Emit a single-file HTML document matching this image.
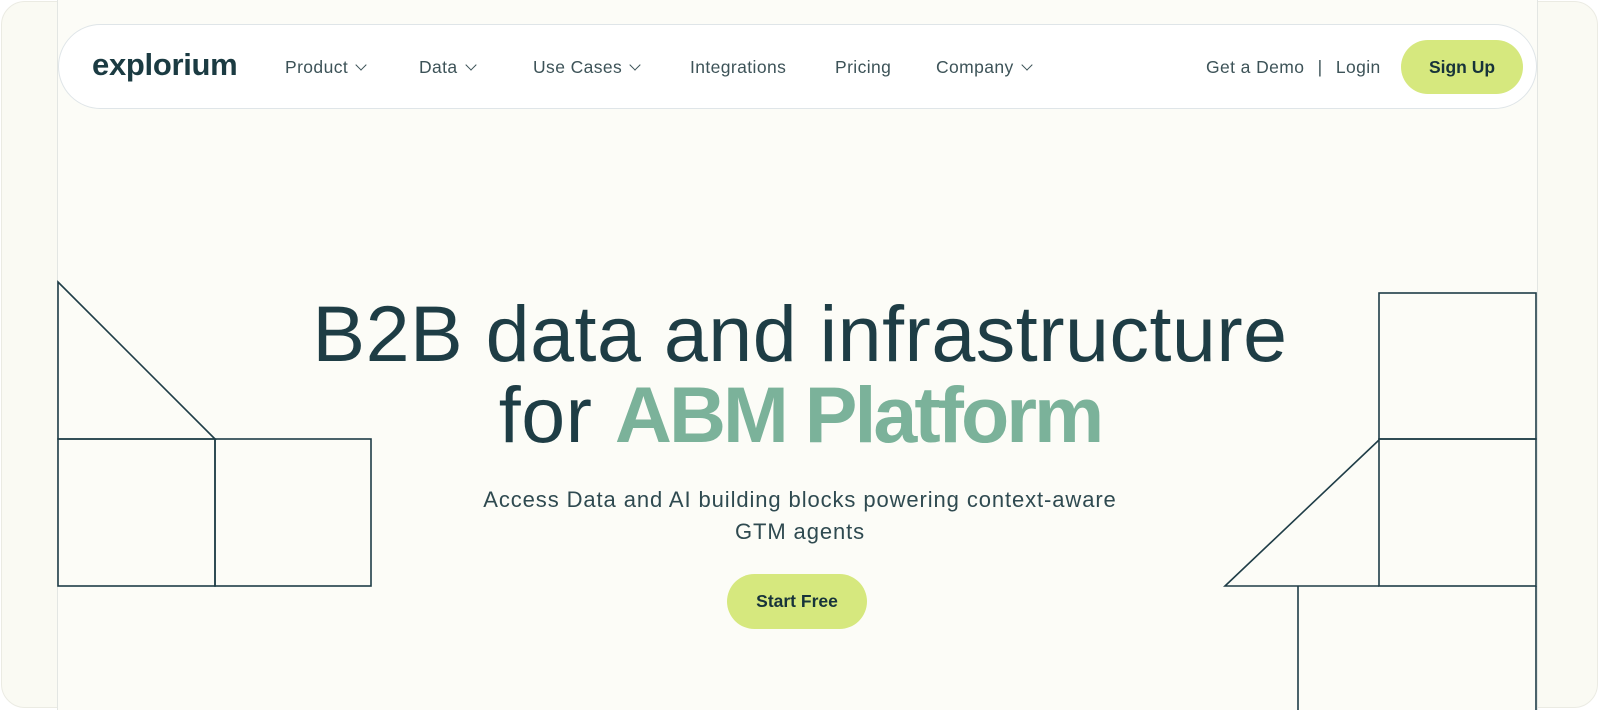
<!DOCTYPE html>
<html><head><style>
*{margin:0;padding:0;box-sizing:border-box}
body{width:1600px;height:710px;background:#fff;font-family:"Liberation Sans",sans-serif;color:#1e3d45;overflow:hidden;position:relative}
.frame{position:absolute;left:1px;top:1px;width:1597px;height:707px;border:1px solid #ebebe3;border-radius:24px;background:#fafaf3;overflow:hidden}
.guide{position:absolute;top:0;bottom:0;width:1px;background:#e3e6e3}
.main{position:absolute;left:58px;top:0;width:1479px;height:710px;background:#fcfcf7}
.nav{position:absolute;left:58px;top:24px;width:1479px;height:85px;background:#fff;border:1px solid #dfe5e8;border-radius:43px}
.logo{position:absolute;left:33px;top:22px;font-size:31px;font-weight:600;letter-spacing:-0.3px;color:#1b3b42}
.nav .it{position:absolute;top:32px;font-size:17.5px;letter-spacing:0.4px;color:#3d5358}
.chev{display:inline-block;width:8px;height:8px;border-right:1.5px solid #3d5358;border-bottom:1.5px solid #3d5358;transform:rotate(45deg);margin-left:9px;position:relative;top:-4px}
.btn{position:absolute;background:#d6e87e;border-radius:28px;font-weight:700;color:#17333a;text-align:center}
h1{position:absolute;left:0;width:1600px;text-align:center;font-weight:400;font-size:79px;color:#1e3d45;letter-spacing:0.5px;line-height:90px}
.sub{position:absolute;left:0;width:1600px;text-align:center;font-size:22px;letter-spacing:0.9px;line-height:32px;color:#2f4a50;top:484px}
</style></head><body>
<div class="frame"></div>
<div class="main"></div>
<div class="guide" style="left:57px"></div>
<div class="guide" style="left:1537px"></div>
<div class="nav">
<div class="logo">explorium</div>
<div class="it" style="left:226px">Product<span class="chev"></span></div>
<div class="it" style="left:360px">Data<span class="chev"></span></div>
<div class="it" style="left:474px">Use Cases<span class="chev"></span></div>
<div class="it" style="left:631px">Integrations</div>
<div class="it" style="left:776px">Pricing</div>
<div class="it" style="left:877px">Company<span class="chev"></span></div>
<div class="it" style="left:1147px">Get a Demo <span style="margin:0 8px">|</span> Login</div>
<div class="btn" style="left:1342px;top:15px;width:122px;height:54px;line-height:54px;font-size:17.5px">Sign Up</div>
</div>
<h1 style="top:289px">B2B data and infrastructure</h1>
<h1 style="top:370px">for <b style="color:#7bb29a;font-weight:700;letter-spacing:-3px">ABM Platform</b></h1>
<div class="sub">Access Data and AI building blocks powering context-aware<br>GTM agents</div>
<div class="btn" style="left:727px;top:574px;width:140px;height:55px;line-height:55px;font-size:17.5px">Start Free</div>
<svg width="1600" height="710" style="position:absolute;left:0;top:0" fill="none" stroke="#1f3d47" stroke-width="1.6">
<path d="M58 282 L215 439 L58 439 Z"/>
<rect x="58" y="439" width="157" height="147"/>
<rect x="215" y="439" width="156" height="147"/>
<rect x="1379" y="293" width="157" height="146"/>
<rect x="1379" y="439" width="157" height="147"/>
<path d="M1379 440 L1225 586 L1379 586"/>
<path d="M1298 586 V710 M1536 586 V710"/>
</svg>
</body></html>
